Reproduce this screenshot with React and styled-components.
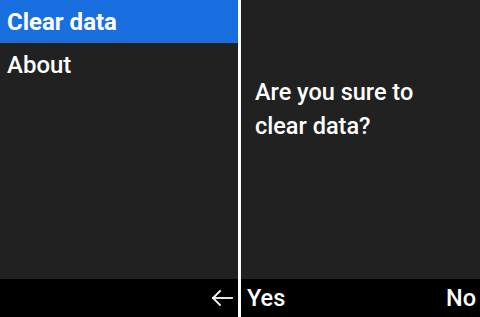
import React from 'react';
import styled, { createGlobalStyle } from 'styled-components';

const GlobalStyle = createGlobalStyle`
  html, body { margin: 0; padding: 0; background: #fff; }
  body { font-family: Roboto, "Noto Sans", sans-serif; }
`;

const Screen = styled.div`
  display: grid;
  grid-template-columns: 238px 239px;
  gap: 3px;
  width: 480px;
  height: 317px;
  background: #fff;
`;

const Panel = styled.div`
  display: flex;
  flex-direction: column;
  background: #212121;
  color: #fff;
  overflow: hidden;
`;

const Content = styled.div`
  flex: 1;
  display: flex;
  flex-direction: column;
`;

const MenuItem = styled.div`
  height: ${p => (p.selected ? '43px' : '44px')};
  display: flex;
  align-items: center;
  padding: 0 7px;
  font-size: 24px;
  font-weight: ${p => (p.selected ? 700 : 500)};
  background: ${p => (p.selected ? '#1a6fe0' : 'transparent')};
`;

const Message = styled.div`
  padding: 75px 14px 0;
  font-size: 23.5px;
  font-weight: 500;
  line-height: 34px;
`;

const BottomBar = styled.div`
  height: 38px;
  background: #000;
  display: flex;
  align-items: center;
  justify-content: ${p => p.justify || 'space-between'};
  padding: 0 4px 0 6px;
  font-size: 23.5px;
  font-weight: 500;
`;

const BackIcon = styled.svg`
  width: 22px;
  height: 22px;
  margin-right: 1px;
`;

export default function App() {
  return (
    <>
      <GlobalStyle />
      <Screen>
        <Panel>
          <Content>
            <MenuItem selected>Clear data</MenuItem>
            <MenuItem>About</MenuItem>
          </Content>
          <BottomBar justify="flex-end">
            <BackIcon viewBox="0 0 22 22" fill="none" stroke="#fff" strokeWidth="1.8" strokeLinecap="square">
              <path d="M2 11H21" />
              <path d="M9 4L2 11L9 18" />
            </BackIcon>
          </BottomBar>
        </Panel>
        <Panel>
          <Content>
            <Message>
              Are you sure to
              <br />
              clear data?
            </Message>
          </Content>
          <BottomBar>
            <span>Yes</span>
            <span>No</span>
          </BottomBar>
        </Panel>
      </Screen>
    </>
  );
}
